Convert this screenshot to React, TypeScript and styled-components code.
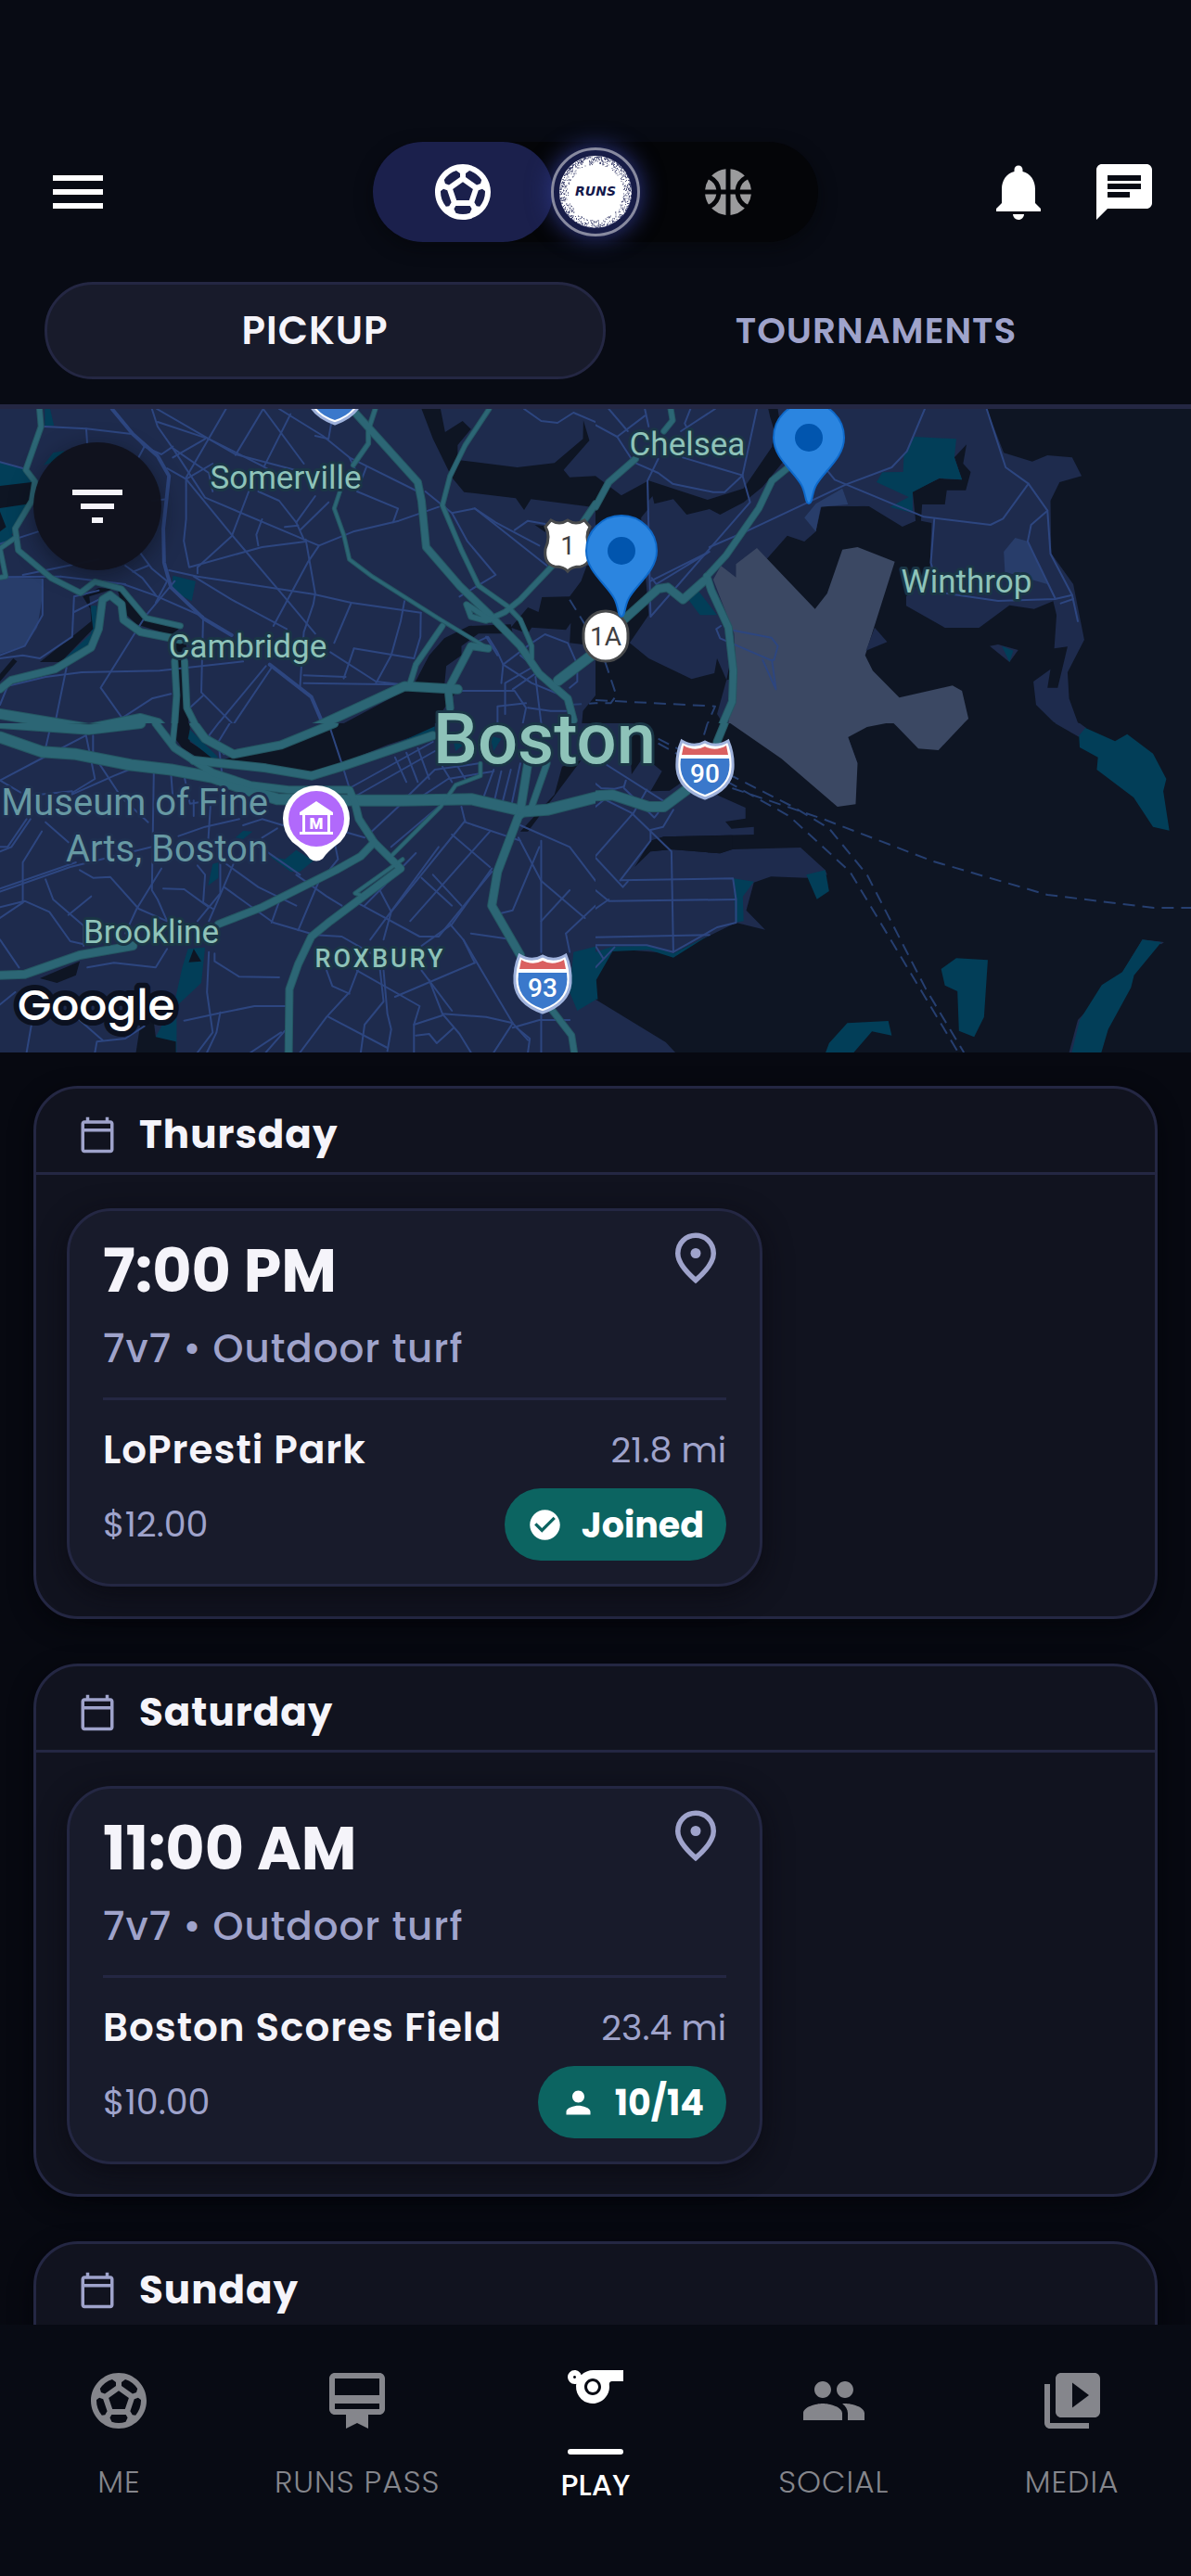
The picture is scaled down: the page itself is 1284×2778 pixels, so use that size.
import React from "react";
import styled, { createGlobalStyle } from "styled-components";
import {
  MdCardMembership,
  MdChat,
  MdCheckCircle,
  MdFilterList,
  MdMenu,
  MdNotifications,
  MdOutlineCalendarToday,
  MdPeople,
  MdPerson,
  MdSports,
  MdSportsBasketball,
  MdSportsSoccer,
  MdVideoLibrary,
} from "react-icons/md";

const color = {
  page: "#080b14",
  list: "#070911",
  panel: "#11131f",
  card: "#181b2b",
  line: "#242743",
  text: "#f5f4fa",
  muted: "#9fa3cb",
  navMuted: "#85868c",
  brand: "#1b204c",
  teal: "#0c6461",
};

const GlobalStyle = createGlobalStyle`
  *, *::before, *::after { box-sizing: border-box; }
  body {
    margin: 0;
    background: ${color.page};
    color: ${color.text};
    font-family: Poppins, Inter, "Liberation Sans", sans-serif;
    -webkit-font-smoothing: antialiased;
  }
  button { font: inherit; color: inherit; background: none; border: 0; padding: 0; cursor: pointer; }
  a { color: inherit; text-decoration: none; }
  h2, h3, p { margin: 0; font-weight: inherit; font-size: inherit; }
`;

const Screen = styled.div`
  display: flex;
  flex-direction: column;
  height: 100vh;
  overflow: hidden;
`;

/* ---------- top bar ---------- */

const TopBar = styled.header`
  display: grid;
  grid-template-columns: 1fr auto 1fr;
  align-items: center;
  padding: 153px 36px 0 48px;
`;

const IconButton = styled.button`
  display: grid;
  place-items: center;
  width: 72px;
  height: 72px;
  color: #fff;
  font-size: 72px;
`;

const TopActions = styled.div`
  display: flex;
  justify-content: flex-end;
  gap: 42px;
`;

const SportSwitch = styled.div`
  display: flex;
  align-items: center;
  justify-content: space-between;
  width: 480px;
  height: 108px;
  margin-left: -12px;
  border-radius: 54px;
  background: #040508;
  box-shadow: 0 6px 18px rgba(4, 5, 8, 0.5);
`;

const SportButton = styled.button<{ $active?: boolean }>`
  display: grid;
  place-items: center;
  width: 194px;
  height: 108px;
  border-radius: 54px;
  background: ${(p) => (p.$active ? color.brand : "transparent")};
  color: ${(p) => (p.$active ? "#fff" : "#9b9b9d")};
  font-size: ${(p) => (p.$active ? 72 : 60)}px;
`;

const LogoBadge = styled.div`
  width: 96px;
  height: 96px;
  margin: 0 -2px;
  border: 3px solid #888a9f;
  border-radius: 50%;
  background: #171c47;
  box-shadow: 0 0 24px 2px #29327b;
  svg { display: block; width: 90px; height: 90px; }
`;

/* ---------- tabs ---------- */

const Tabs = styled.div`
  display: grid;
  grid-template-columns: 1fr 1fr;
  padding: 43px 26px 27px 48px;
  border-bottom: 5px solid ${color.line};
`;

const Tab = styled.button<{ $active?: boolean }>`
  height: 105px;
  padding-right: 22px;
  border: 3px solid ${(p) => (p.$active ? color.line : "transparent")};
  border-radius: 52px;
  background: ${(p) => (p.$active ? color.card : "transparent")};
  color: ${(p) => (p.$active ? color.text : color.muted)};
  font-size: ${(p) => (p.$active ? 42 : 39)}px;
  font-weight: 600;
  letter-spacing: 1px;
`;

/* ---------- map ---------- */

const MapPanel = styled.section`
  position: relative;
  flex: none;
  aspect-ratio: 1284 / 694;
  background: #0e1523;
  overflow: hidden;
  > svg { display: block; width: 100%; height: 100%; }
`;

const FilterButton = styled.button`
  position: absolute;
  top: 36px;
  left: 36px;
  display: grid;
  place-items: center;
  width: 138px;
  height: 138px;
  border-radius: 50%;
  background: rgba(16, 18, 29, 0.97);
  box-shadow: 0 6px 24px rgba(8, 11, 20, 0.5);
  color: ${color.text};
  font-size: 72px;
`;

/* ---------- day list ---------- */

const DayList = styled.main`
  flex: 1;
  min-height: 0;
  display: flex;
  flex-direction: column;
  gap: 48px;
  padding: 36px;
  overflow-y: auto;
  scrollbar-width: none;
  background: ${color.list};
`;

const DayPanel = styled.section`
  flex: none;
  border: 3px solid ${color.line};
  border-radius: 48px;
  background: ${color.panel};
  box-shadow: 0 8px 24px rgba(3, 4, 8, 0.7);
`;

const DayHeader = styled.header`
  display: flex;
  align-items: center;
  gap: 24px;
  height: 93px;
  padding: 9px 45px 0;
  border-bottom: 3px solid ${color.line};
  color: ${color.muted};
  font-size: 42px;
`;

const DayName = styled.h2`
  color: ${color.text};
  font-size: 42px;
  font-weight: 700;
  line-height: 60px;
  letter-spacing: 1px;
`;

const Games = styled.div`
  display: flex;
  padding: 36px 33px 32px;
`;

const GameCard = styled.article`
  width: 750px;
  padding: 18px 36px 25px;
  border: 3px solid ${color.line};
  border-radius: 48px;
  background: ${color.card};
  box-shadow: 0 8px 30px rgba(8, 9, 16, 0.7);
`;

const Row = styled.div`
  display: flex;
  align-items: center;
  justify-content: space-between;
`;

const TitleRow = styled(Row)`
  align-items: flex-start;
`;

const Time = styled.h3`
  font-size: 65px;
  font-weight: 700;
  line-height: 94px;
`;

const PinButton = styled.button`
  width: 66px;
  height: 66px;
  svg { display: block; width: 66px; height: 66px; }
`;

const Format = styled.p`
  padding-bottom: 16px;
  margin-bottom: 22px;
  border-bottom: 3px solid ${color.line};
  color: ${color.muted};
  font-size: 42px;
  font-weight: 500;
  line-height: 73px;
  letter-spacing: 1px;
`;

const Venue = styled.p`
  font-size: 42px;
  font-weight: 600;
  line-height: 64px;
  letter-spacing: 1px;
`;

const Detail = styled.p`
  color: ${color.muted};
  font-size: 38px;
  font-weight: 400;
  line-height: 60px;
`;

const BadgeRow = styled(Row)`
  margin-top: 9px;
`;

const Badge = styled.span`
  display: flex;
  align-items: center;
  gap: 20px;
  height: 78px;
  padding: 0 24px;
  border-radius: 39px;
  background: ${color.teal};
  color: #fff;
  font-size: 38px;
  font-weight: 700;
`;

/* ---------- bottom navigation ---------- */

const BottomNav = styled.nav`
  flex: none;
  display: grid;
  grid-template-columns: repeat(5, 1fr);
  height: 271px;
  background: ${color.page};
`;

const NavLink = styled.a<{ $active?: boolean }>`
  display: flex;
  flex-direction: column;
  align-items: center;
  padding-top: ${(p) => (p.$active ? 31 : 46)}px;
  color: ${(p) => (p.$active ? "#fff" : color.navMuted)};
  font-size: ${(p) => (p.$active ? 32 : 33)}px;
  font-weight: ${(p) => (p.$active ? 500 : 300)};
  line-height: 44px;
  letter-spacing: ${(p) => (p.$active ? 0 : 1)}px;
  > svg { font-size: 72px; flex: none; }
`;

const NavMarker = styled.span`
  width: 60px;
  height: 6px;
  margin-top: 31px;
  border-radius: 3px;
  background: #fff;
`;

const NavLabel = styled.span<{ $active?: boolean }>`
  margin-top: ${(p) => (p.$active ? 11 : 30)}px;
`;

/* ---------- drawings ---------- */

const speckles = Array.from({ length: 800 }, (_, i) => {
  const a = Math.abs(Math.sin(i * 78.233) * 12543.853) % 6.2832;
  const noise = Math.abs(Math.sin(i * 12.9898) * 43758.5453) % 1;
  const r = 38.6 - 9 * noise * noise;
  return { x: Math.round((45 + r * Math.cos(a)) * 2) / 2, y: Math.round((45 + r * Math.sin(a)) * 2) / 2 };
});

function RunsLogo() {
  return (
    <svg viewBox="0 0 90 90" role="img" aria-label="Runs">
      <circle cx="45" cy="45" r="39" fill="#fff" />
      <g fill="#23285a" fillOpacity="0.8">
        {speckles.map((s, i) => (
          <rect key={i} x={s.x} y={s.y} width="1" height="1" />
        ))}
      </g>
      <text
        x="45"
        y="49"
        textAnchor="middle"
        fontFamily="DejaVu Sans, sans-serif"
        fontWeight="700"
        fontStyle="italic"
        fontSize="14"
        fill="#14184a"
      >
        RUNS
      </text>
    </svg>
  );
}

function PinOutline() {
  return (
    <svg viewBox="0 0 24 24" fill="none" aria-hidden="true">
      <path
        d="M12 20.6 C7.2 16.4 5 13.1 5 10.1 C5 5.9 8.2 3 12 3 C15.8 3 19 5.9 19 10.1 C19 13.1 16.8 16.4 12 20.6Z"
        stroke={color.muted}
        strokeWidth="2"
      />
      <circle cx="12" cy="10" r="2" fill={color.muted} />
    </svg>
  );
}

type Area = "water" | "land" | "park" | "light" | "airport";
type Tile = {
  x: number;
  y: number;
  base: Area;
  areas: [Area, string][];
  roads: string[];
  highways: [number, string][];
  ferries?: string[];
};

const areaFill: Record<Area, string> = {
  water: "#0e1523",
  land: "#1e2b4d",
  park: "#023e58",
  light: "#283d6a",
  airport: "#3b4863",
};

const tiles: Tile[] = [
  {
    x: 0,
    y: -11,
    base: "land",
    areas: [
      ["water", "1110,33 1160,33 1172,108 1218,72 1240,98 1205,150 1205,198 1362,222 1460,208 1535,130 1536,70 1552,135 1484,230 1500,254 1568,250 1568,352 1398,325 1380,360 1358,322 1222,302 1190,255 1140,130"],
      ["park", "0,205 60,225 90,262 84,345 30,440 45,452 0,478"],
      ["water", "0,282 84,270 78,340 0,354"],
      ["water", "0,365 16,415 0,430"],
      ["park", "115,215 140,175 170,168 150,200"],
      ["park", "455,572 515,590 505,655 453,622"],
      ["park", "118,33 132,33 142,87 118,87"],
      ["light", "0,577 112,582 112,640 98,740 65,800 0,825"],
      ["park", "160,852 240,760 240,670 255,670 250,790 220,830"],
      ["water", "105,852 200,760 240,720 238,680 218,640 260,612 300,615 235,640 245,745 160,852"],
      ["water", "310,620 345,640 385,705 475,740 450,765 360,730 325,690"],
      ["water", "452,780 490,780 497,1080 465,1080"],
      ["water", "0,890 35,840 45,850 0,915"],
      ["water", "860,1080 1065,945 1200,950 1165,1010 1145,1080"],
      ["water", "1090,925 1130,830 1170,775 1235,735 1345,730 1350,760 1260,760 1215,800 1215,830 1175,865 1170,930"],
      ["water", "1345,740 1390,675 1418,690 1427,642 1500,640 1530,590 1545,540 1568,540 1568,800 1500,790 1503,725 1490,748 1400,740 1390,760"],
      ["water", "1568,960 1535,1010 1530,1080 1568,1080"],
      ["water", "1408,408 1436,412 1436,432"],
    ],
    roads: [
      "118,90 227,97 352,115 380,155 425,180 455,155",
      "400,33 415,90 455,160 540,320 800,455 840,475 930,430 1050,395 1155,350",
      "415,75 550,130 695,220 750,260",
      "413,33 550,130 620,180 790,235",
      "595,33 490,255", "693,33 620,182", "765,50 695,220", "693,33 800,210",
      "735,33 850,120 920,190 1100,300",
      "440,225 490,260 610,440 755,650 830,760",
      "490,260 490,390 484,460 498,545 690,480 805,462",
      "655,300 610,445 520,545 520,565",
      "680,300 735,330 780,400 800,455",
      "690,390 675,440 680,475", "830,315 780,400", "865,335 790,425", "750,415 785,410",
      "455,160 550,240 560,300", "455,190 540,130", "490,260 560,210",
      "830,120 865,130 875,60", "920,190 940,240", "965,220 940,300 1048,355 1035,400",
      "840,475 810,530 720,735", "805,455 830,630 825,665 800,755 790,930",
      "445,555 520,575 825,632 925,660 1108,692", "510,575 610,650 755,745",
      "925,660 880,790", "1065,655 1055,720 1030,830 990,920", "1108,692 1107,770 1090,840",
      "870,820 990,915 1060,925", "932,808 1090,840", "932,808 905,905", "800,895 910,900", "800,920 1060,925",
      "325,600 405,635 535,705 530,950 610,1048", "160,575 330,600",
      "1190,370 1250,355 1305,400 1420,475", "1190,370 1230,460 1305,570 1210,640",
      "1250,355 1440,540", "1120,300 1190,370", "1355,425 1390,395 1435,405",
      "1380,33 1425,72 1468,78 1510,45 1568,75",
      "0,205 60,225", "227,97 230,150", "380,155 365,190",
      "370,500 400,550 440,590 410,660", "330,540 375,580 410,635", "350,560 390,540", "400,330 440,325",
      "0,840 60,830 105,840 190,770 195,640 260,620", "195,690 260,650", "0,577 160,575",
      "0,935 120,900 215,885 420,880 640,850", "175,870 140,1080", "460,590 385,700 265,935 320,1030",
      "450,955 400,970 325,1030", "715,870 600,1080", "700,865 555,1080", "535,960 500,1000",
      "0,470 100,430", "60,570 260,520", "112,585 112,700 65,800 0,830", "20,930 0,990",
      "1250,790 1285,770 1310,820 1325,860 1320,920", "1325,860 1400,790 1435,762 1495,790 1520,860 1520,915 1500,935",
      "1210,945 1355,945 1385,1000 1375,1060", "1330,1020 1330,920 1400,870", "1350,940 1420,880",
      "1310,1060 1310,995 1385,985", "1390,1000 1450,1010 1490,1010", "1410,900 1425,1050",
      "1325,860 1400,920 1480,960", "1370,830 1440,900", "1280,770 1310,830",
    ],
    highways: [
      [4, "295,33 350,115 415,185 445,250 430,420 432,530 450,610 535,710 610,765"],
      [4, "710,860 820,965 860,1080"],
      [7, "104,33 108,90 68,230 92,268 84,330 40,420 48,490 135,580 212,628 250,592 320,615 385,710 475,735"],
      [6, "0,485 40,450"], [6, "0,485 15,575 0,578"],
      [9, "475,780 370,755 325,715 320,665 290,635 270,650 260,745 240,805 145,875 30,910 0,940"],
      [8, "460,850 465,960 458,1080"], [8, "486,850 492,1000 525,1080"],
      [12, "0,1020 235,1068 370,1035 415,1050 440,1080"],
      [11, "800,1080 1065,930 1205,940"],
      [9, "1185,1000 1180,940 1240,800 1285,808"],
      [5, "1285,808 1160,715 980,575 920,520 905,440 880,355 895,300"],
      [6, "930,215 970,145 970,100 988,33"],
      [9, "935,45 1100,270 1110,330 1122,480 1210,605 1290,700 1370,800 1420,890 1495,970 1510,1040"],
      [6, "1288,33 1225,150 1185,250 1165,345 1215,490 1260,605 1335,670 1370,715 1400,800 1400,840"],
      [8, "1568,340 1535,400"],
      [7, "1455,540 1370,650 1330,690 1280,718 1240,705 1228,665 1290,715"],
      [12, "1568,820 1470,912"],
      [7, "1165,735 1095,860 1080,920"],
    ],
    ferries: ["1500,650 1545,740", "1500,990 1568,985"],
  },
  {
    x: 642,
    y: -11,
    base: "water",
    areas: [
      ["land", "0,33 455,33 460,60 470,100 465,155 390,290 295,327 140,265 68,313 0,250"],
      ["land", "140,330 150,315 155,340 205,325 240,375 300,357 328,375 390,335 440,285 500,195 480,33 600,33 660,342 720,348 595,348 580,430 550,462 505,443 450,520 508,600 370,760 345,910 320,840 313,888 253,907 140,840 90,790 140,700 120,385 140,355"],
      ["land", "500,33 1030,33 1075,175 1150,203 1190,183 1255,190 1280,250 1222,270 1198,330 1200,500 1258,600 1287,780 1243,885 1247,970 1270,1048 1320,1080 1250,1080 1205,1045 1160,990 1153,915 1198,875 1190,935 1217,935 1243,802 1208,808 1214,700 1205,655 1155,680 1090,668 1010,741 920,741 818,670 818,640 880,560 885,402 857,395 860,342 920,342 925,296 975,296 988,237 968,210 977,148 945,190 965,262 905,258 835,300 843,395 808,414 720,348 600,342"],
      ["land", "345,910 320,1020 350,1080 400,1080 400,900"],
      ["airport", "310,585 330,540 370,578 370,535 425,483 508,590 578,680 610,630 650,488 690,480 788,527 710,830 730,880 800,967 940,928 965,945 982,1035 945,1080 805,1080 795,1062 765,1050 670,1080 385,1080 350,1050 370,900 365,760"],
      ["land", "735,740 768,787 712,815"],
      ["light", "580,340 650,290 665,342 593,350 580,430 550,385"],
      ["light", "1075,495 1105,450 1140,462 1190,600 1078,560"],
      ["park", "840,123 950,130 945,190 965,262 905,257 835,302 835,370 775,350 825,318 740,270 755,238 810,237 812,180"],
      ["park", "245,650 270,620 320,700 275,700"],
      ["land", "1038,800 1060,795 1113,813 1090,852"],
      ["park", "1070,800 1100,815 1090,852"],
      ["park", "1285,1062 1320,1080 1280,1080"],
    ],
    roads: [
      "0,85 57,123 130,55", "35,33 85,105", "130,33 140,90",
      "57,123 100,205 165,240 203,275 310,302 340,302 387,248",
      "230,190 387,248 425,33", "387,248 407,335 145,705 137,265 165,195",
      "315,33 225,105", "250,33 235,80 245,105",
      "867,33 820,170 780,222 660,277 395,430 300,480",
      "612,235 630,262 865,382 1040,408 1073,388 1140,275",
      "1030,33 1080,222 1140,275 1190,362 1198,502 1255,635 1270,720",
      "1190,362 1147,408 1138,462 1210,645", "892,390 883,530 890,560",
      "925,630 1060,654 1210,648 1255,635", "1225,662 1258,648", "145,590 300,495 160,600 148,580",
      "330,735 318,745 328,775 460,845 470,845 480,800 463,773 365,750", "440,845 475,940 465,850",
    ],
    highways: [
      [7, "198,33 203,70 180,105"],
      [8, "105,195 35,270 0,350"],
      [8, "505,225 465,265 430,355 345,505 293,575"],
      [9, "293,575 305,620 350,740 363,880 360,980 325,1080"],
      [10, "70,720 165,615 190,610 230,650 285,590"],
    ],
    ferries: ["25,850 55,960 40,985 0,985", "0,975 315,995 285,1080"],
  },
  {
    x: 0,
    y: 339,
    base: "land",
    areas: [
      ["water", "465,0 500,0 500,60 575,120 520,110 480,80 462,50"],
      ["water", "640,100 740,70 885,0 1145,0 1145,20 1020,70 900,130 820,165 700,145 580,120"],
      ["water", "1480,140 1530,120 1390,350 1370,350 1460,230"],
      ["water", "105,825 210,770 200,815 150,840"],
      ["park", "500,20 575,110 560,115 495,50"],
      ["park", "1145,10 1145,30 1000,90"],
      ["park", "620,370 640,348 665,350 640,375"],
      ["park", "710,430 750,440 780,410 825,445 790,480 765,480"],
      ["park", "575,450 575,500 548,525 560,455"],
      ["park", "495,730 540,725 530,840 465,915 465,1065 410,1015 460,900 480,790"],
      ["park", "1510,740 1568,722 1568,895 1520,930 1500,870"],
      ["park", "1190,40 1230,60 1200,90"],
      ["park", "1290,40 1320,50 1300,90"],
      ["water", "510,730 530,770 497,773"],
      ["water", "370,970 405,965 410,1015 463,1030 463,1065 358,1065"],
    ],
    roads: [
      "0,185 100,120 225,40", "0,185 70,235 190,220", "120,80 135,0", "225,30 250,180 190,225",
      "190,230 300,170 340,150", "245,40 245,100 320,240 390,320", "80,310 30,400 0,415", "70,310 20,400 0,400", "120,320 180,385",
      "405,160 400,540 415,570 440,640", "450,160 455,240", "485,170 500,260 555,250 545,440",
      "0,545 185,465 400,400", "0,535 200,450", "60,580 0,630", "60,580 60,450 110,350",
      "210,475 245,500 290,497 365,600 440,640", "120,505 140,570 220,655 220,720",
      "425,470 360,600 330,680", "430,535 485,537 550,595", "520,460 540,490 535,580 560,600",
      "580,440 580,550 520,640", "620,440 550,640", "590,450 680,530 780,590",
      "590,530 720,645 830,685 900,690 1000,760", "780,490 860,560 900,590", "840,510 785,670", "740,560 715,645",
      "0,700 50,790", "0,595 65,575 130,610 185,705 220,715", "85,960 70,1065", "0,910 40,870",
      "440,730 410,790 300,775 230,790", "550,740 545,870 560,1000 520,1065", "565,745 565,770 630,820 735,822",
      "485,962 570,940 670,915 760,915", "580,935 570,1000 545,1065", "750,995 700,1065", "740,1000 660,1065",
      "250,1065 255,1030 330,1020 380,980", "200,950 270,1025",
      "790,1065 860,950 920,870 945,790", "865,950 1020,1050", "860,800 875,850 920,875",
      "940,800 1105,915 1090,975 1090,1065", "1010,800 1020,940 1030,990 1020,1060", "1000,790 1010,900 960,975 950,1065",
      "1130,830 1165,940 1280,950 1350,970 1300,1065", "1110,800 1190,930", "1250,775 1040,885", "1090,975 1165,945",
      "1095,1010 1130,1005 1150,1035 1195,985", "1220,700 1350,970 1390,1025", "1240,680 1350,700",
      "1165,940 1210,1005 1240,1065", "1350,985 1420,960 1500,960", "1425,380 1425,740", "1425,930 1425,1065", "1360,985 1395,1020 1390,1065",
      "940,580 1105,690 1155,690 1295,480", "1295,470 1190,650 1110,720", "1155,400 975,700",
      "1095,420 1000,540 960,590", "1000,540 1030,610 1010,700", "1140,490 1215,590", "1155,270 1030,400",
      "1225,315 1030,610", "1290,350 1080,640", "1215,270 1225,320 1370,380", "1190,360 1290,465", "1110,500 1190,590",
      "1185,650 1220,700 1250,775", "1370,330 1500,400 1568,510", "1365,370 1425,510 1540,630",
      "1300,620 1350,605 1420,400", "1500,540 1425,640", "1490,680 1500,740", "1568,590 1490,680",
      "920,210 1140,60", "930,240 1145,90", "1040,110 1070,190", "1070,95 1100,190", "1100,80 1130,180",
      "1070,240 1145,150 1260,130", "1100,245 1180,180 1300,155", "1300,150 1270,250", "1320,155 1300,260",
      "1345,150 1320,270", "1370,130 1345,275", "970,360 1075,240", "865,0 900,130",
      "575,0 550,40 590,100", "605,0 575,60 585,170", "640,330 690,310 800,350", "660,380 720,430 790,490",
      "905,150 920,210", "470,365 540,335 630,310", "510,250 510,300", "1165,140 1190,190", "1200,130 1225,180",
      "905,350 960,370", "880,380 890,440 870,470", "690,370 730,340", "240,560 180,620",
    ],
    highways: [
      [12, "0,0 235,20 370,0"],
      [13, "0,45 110,92 200,100 345,135 450,150 560,175 650,215 730,245 960,250 1060,250 1240,245 1380,285 1440,280 1568,240"],
      [9, "410,0 460,80 560,160 660,200 760,215 920,215 935,260 945,310 985,385 1055,470 870,640 820,690 785,780 762,860 760,1065"],
      [10, "510,0 540,50 615,100 740,70 880,0"],
      [10, "510,120 700,145 820,170 900,140 1140,40"],
      [9, "575,650 690,595 885,475 950,430 985,385"],
      [10, "0,815 65,812 210,750 350,720"],
      [5, "1060,440 935,550 960,560"],
      [5, "1030,430 1160,270 1200,200 1265,170 1265,130"],
      [10, "1390,130 1370,285 1310,480 1295,590 1370,750"],
      [8, "1440,130 1400,270 1370,300"],
      [8, "1455,930 1505,1010 1512,1065"],
      [7, "460,0 455,60"],
    ],
  },
  {
    x: 642,
    y: 339,
    base: "water",
    areas: [
      ["land", "0,0 100,0 90,60 95,165 120,120 150,130 175,155 145,220 195,218 240,180 325,235 395,273 395,308 342,318 358,341 417,335 417,360 180,367 145,380 103,465 145,415 200,408 328,421 360,408 540,402 605,475 610,490 555,500 462,496 417,515 397,605 447,668 370,645 205,745 45,730 0,830"],
      ["water", "180,367 145,380 145,415 200,408 328,421 360,408 360,362"],
      ["land", "0,893 185,1032 210,1065 0,1065"],
      ["park", "363,502 417,512 388,560 390,640 368,645"],
      ["park", "555,490 605,475 615,543 583,569"],
      ["park", "45,738 140,733 205,758 300,685 205,745 140,720 45,722 0,740 0,893 6,893 2,830"],
      ["land", "1210,0 1275,0 1292,15 1273,44"],
      ["park", "1290,15 1368,58 1400,35 1468,98 1503,180 1495,220 1511,347 1468,335 1417,240 1320,150 1323,110 1275,78 1273,40"],
      ["park", "950,760 1033,766 1023,950 997,1015 957,995 953,867 920,848 910,795"],
      ["park", "606,1065 615,1035 663,970 771,963 780,1010 728,997 680,1065"],
      ["land", "1440,700 1497,708 1490,715 1440,705 1387,810 1270,960 1247,1065 1260,1065"],
      ["park", "1440,700 1490,708 1418,815 1410,855 1350,990 1332,1065 1254,1065 1275,960 1333,847 1387,805"],
      ["land", "665,45 690,130 652,110"],
      ["airport", "355,0 765,0 715,12 665,45 690,130 685,262 637,270 490,115"],
      ["airport", "795,12 785,0 970,0 903,87 850,82"],
    ],
    roads: [
      "0,430 100,290", "0,435 72,530 85,512", "30,250 95,290 200,415 205,740", "0,270 20,250",
      "65,508 362,502 370,570 370,645 320,660 205,740 135,718 0,718",
      "65,508 145,380 145,345 178,335 205,280", "0,600 35,570", "0,540 35,575 370,570", "0,692 300,685",
      "0,195 15,210 50,212 75,205 80,185", "30,135 190,260", "75,210 155,305 165,290", "135,215 100,290",
      "0,790 50,725", "0,720 20,760",
    ],
    highways: [
      [12, "0,235 45,232 140,270 180,270 240,215"],
      [9, "340,0 320,60"],
    ],
    ferries: [
      "295,0 285,40", "165,50 520,270 615,340 715,490 870,860 970,1065", "165,65 510,300 670,480 955,1065",
      "360,210 500,268 600,310 890,447 1190,555 1470,597 1568,597",
    ],
  },
];

function MapTile({ tile }: { tile: Tile }) {
  return (
    <svg x={tile.x} y={tile.y} width="642" height="360" viewBox="0 0 1568 1080" preserveAspectRatio="none">
      <rect width="1568" height="1080" fill={areaFill[tile.base]} />
      {tile.areas.map(([kind, points], i) => (
        <polygon key={i} points={points} fill={areaFill[kind]} />
      ))}
      <g fill="none" strokeLinejoin="round" strokeLinecap="round">
        {tile.ferries?.map((points, i) => (
          <polyline key={i} points={points} stroke="#263f70" strokeWidth="2" strokeDasharray="13 8" strokeLinecap="butt" vectorEffect="non-scaling-stroke" />
        ))}
        {tile.roads.map((points, i) => (
          <polyline key={i} points={points} stroke="#2d4680" strokeWidth="2" vectorEffect="non-scaling-stroke" />
        ))}
        {tile.highways.map(([w, points], i) => (
          <polyline key={i} points={points} stroke={w === 4 ? "#2d4680" : "#255763"} strokeWidth={w} vectorEffect="non-scaling-stroke" />
        ))}
        {tile.highways.filter(([w]) => w > 4).map(([w, points], i) => (
          <polyline key={i} points={points} stroke="#2c6675" strokeWidth={w - 2} vectorEffect="non-scaling-stroke" />
        ))}
      </g>
    </svg>
  );
}

function Interstate({ x, y, label }: { x: number; y: number; label?: string }) {
  const shield = "M-25 -30 Q-12 -22 0 -29 Q12 -22 25 -30 Q31 -16 30 0 Q28 22 0 32 Q-28 22 -30 0 Q-31 -16 -25 -30Z";
  return (
    <g transform={`translate(${x} ${y})`}>
      <path d={shield} fill="#fff" stroke="#9fb2dc" strokeWidth="3" />
      <path d="M-23 -25 Q-11 -18 0 -24 Q11 -18 23 -25 L25 -15 H-25Z" fill="#da6060" />
      <path d="M-26 -11 H26 Q30 18 0 28 Q-30 18 -26 -11Z" fill="#3a78cb" />
      {label && <text y="15" textAnchor="middle" fontSize="28" fontWeight="500" fill="#fff">{label}</text>}
    </g>
  );
}

function GamePin({ x, y }: { x: number; y: number }) {
  return (
    <g transform={`translate(${x} ${y})`}>
      <path d="M0 71 C-4 71 -3 60 -8 51 C-16 36 -38 22 -38 0 A38 38 0 0 1 38 0 C38 22 16 36 8 51 C3 60 4 71 0 71Z" fill="#2b85e0" stroke="#0f6acb" strokeWidth="2" />
      <circle r="15" fill="#0155ae" />
    </g>
  );
}

const MapText = styled.text<{ $size: number; $tone?: string }>`
  font-family: Roboto, "Liberation Sans", sans-serif;
  font-size: ${(p) => p.$size}px;
  fill: ${(p) => p.$tone ?? "#8ec3b9"};
  stroke: ${(p) => (p.$tone ? "#1e2f50" : "#1a3646")};
  stroke-width: 6px;
  stroke-linejoin: round;
  paint-order: stroke;
`;

const places = [
  { name: "Somerville", x: 308, y: 86 },
  { name: "Cambridge", x: 267, y: 268 },
  { name: "Chelsea", x: 741, y: 50 },
  { name: "Winthrop", x: 1042, y: 198 },
  { name: "Brookline", x: 163, y: 576 },
];

function CityMap() {
  return (
    <svg viewBox="0 0 1284 694" preserveAspectRatio="xMidYMid slice" fontFamily="Roboto, sans-serif" role="img" aria-label="Map of Boston">
      {tiles.map((tile, i) => (
        <MapTile key={i} tile={tile} />
      ))}
      {places.map((p) => (
        <MapText key={p.name} $size={35} x={p.x} y={p.y} textAnchor="middle">{p.name}</MapText>
      ))}
      <MapText $size={76} x="587" y="382" textAnchor="middle" fontWeight="500">Boston</MapText>
      <MapText $size={27} x="410" y="602" textAnchor="middle" fontWeight="500" letterSpacing="3">ROXBURY</MapText>
      <MapText $size={40} $tone="#6799a3" x="289" y="438" textAnchor="end">Museum of Fine</MapText>
      <MapText $size={40} $tone="#6799a3" x="289" y="488" textAnchor="end">Arts, Boston</MapText>

      <Interstate x={361} y={-16} />
      <Interstate x={760} y={388} label="90" />
      <Interstate x={585} y={619} label="93" />

      <g transform="translate(612 147)">
        <path d="M-18 -27 Q-9 -21 0 -27 Q9 -21 18 -27 L24 -20 Q18 -10 24 4 Q26 20 14 23 Q4 23 0 28 Q-4 23 -14 23 Q-26 20 -24 4 Q-18 -10 -24 -20Z" fill="#fff" stroke="#484a4c" strokeWidth="3" />
        <text y="10" textAnchor="middle" fontSize="28" fill="#3f4042">1</text>
      </g>
      <g transform="translate(653 245)">
        <rect x="-24" y="-27" width="48" height="54" rx="24" fill="#fff" stroke="#484a4c" strokeWidth="3" />
        <text y="10" textAnchor="middle" fontSize="28" fill="#3f4042">1A</text>
      </g>

      <GamePin x={872} y={31} />
      <GamePin x={670} y={153} />

      <g transform="translate(341 442)">
        <path d="M-7 43 Q-12 35 -26 25 A36 36 0 1 1 26 25 Q12 35 7 43 Q0 48 -7 43Z" fill="#fff" />
        <circle r="30" fill="#b169fb" />
        <path d="M0 -19 L18 -7 V-4 H-18 V-7Z M-15 -4 H-12 V14 H-15Z M12 -4 H15 V14 H12Z M-18 14 H18 V17 H-18Z" fill="#fff" />
        <text y="11" textAnchor="middle" fontSize="17" fontWeight="900" fill="#fff">M</text>
      </g>

      <text x="19" y="659" fontFamily="Poppins, Lato, sans-serif" fontWeight="500" fontSize="47" fill="#fff" stroke="#0b1120" strokeWidth="12" strokeLinejoin="round" paintOrder="stroke">
        Google
      </text>
    </svg>
  );
}

/* ---------- content ---------- */

type Game = { time: string; format: string; venue: string; distance: string; price: string; status: string; joined?: boolean };

const days: { day: string; game?: Game }[] = [
  { day: "Thursday", game: { time: "7:00 PM", format: "7v7 • Outdoor turf", venue: "LoPresti Park", distance: "21.8 mi", price: "$12.00", status: "Joined", joined: true } },
  { day: "Saturday", game: { time: "11:00 AM", format: "7v7 • Outdoor turf", venue: "Boston Scores Field", distance: "23.4 mi", price: "$10.00", status: "10/14" } },
  { day: "Sunday" },
];

const navItems = [
  { label: "ME", Icon: MdSportsSoccer },
  { label: "RUNS PASS", Icon: MdCardMembership },
  { label: "PLAY", Icon: MdSports, active: true },
  { label: "SOCIAL", Icon: MdPeople },
  { label: "MEDIA", Icon: MdVideoLibrary },
];

function GameItem({ game }: { game: Game }) {
  return (
    <GameCard>
      <TitleRow>
        <Time>{game.time}</Time>
        <PinButton aria-label={`Show ${game.venue} on the map`}>
          <PinOutline />
        </PinButton>
      </TitleRow>
      <Format>{game.format}</Format>
      <Row>
        <Venue>{game.venue}</Venue>
        <Detail>{game.distance}</Detail>
      </Row>
      <BadgeRow>
        <Detail>{game.price}</Detail>
        <Badge>
          {game.joined ? <MdCheckCircle size={39} /> : <MdPerson size={39} />}
          {game.status}
        </Badge>
      </BadgeRow>
    </GameCard>
  );
}

export default function App() {
  return (
    <Screen>
      <GlobalStyle />
      <TopBar>
        <IconButton aria-label="Menu"><MdMenu /></IconButton>
        <SportSwitch>
          <SportButton $active aria-label="Soccer"><MdSportsSoccer /></SportButton>
          <LogoBadge><RunsLogo /></LogoBadge>
          <SportButton aria-label="Basketball"><MdSportsBasketball /></SportButton>
        </SportSwitch>
        <TopActions>
          <IconButton aria-label="Notifications"><MdNotifications /></IconButton>
          <IconButton aria-label="Messages"><MdChat /></IconButton>
        </TopActions>
      </TopBar>
      <Tabs role="tablist">
        <Tab role="tab" aria-selected="true" $active>PICKUP</Tab>
        <Tab role="tab" aria-selected="false">TOURNAMENTS</Tab>
      </Tabs>
      <MapPanel>
        <CityMap />
        <FilterButton aria-label="Filter"><MdFilterList /></FilterButton>
      </MapPanel>
      <DayList>
        {days.map(({ day, game }) => (
          <DayPanel key={day}>
            <DayHeader>
              <MdOutlineCalendarToday aria-hidden="true" />
              <DayName>{day}</DayName>
            </DayHeader>
            <Games>{game && <GameItem game={game} />}</Games>
          </DayPanel>
        ))}
      </DayList>
      <BottomNav>
        {navItems.map(({ label, Icon, active }) => (
          <NavLink key={label} href={`#${label.toLowerCase().replace(" ", "-")}`} $active={active}>
            <Icon aria-hidden="true" />
            {active && <NavMarker />}
            <NavLabel $active={active}>{label}</NavLabel>
          </NavLink>
        ))}
      </BottomNav>
    </Screen>
  );
}
